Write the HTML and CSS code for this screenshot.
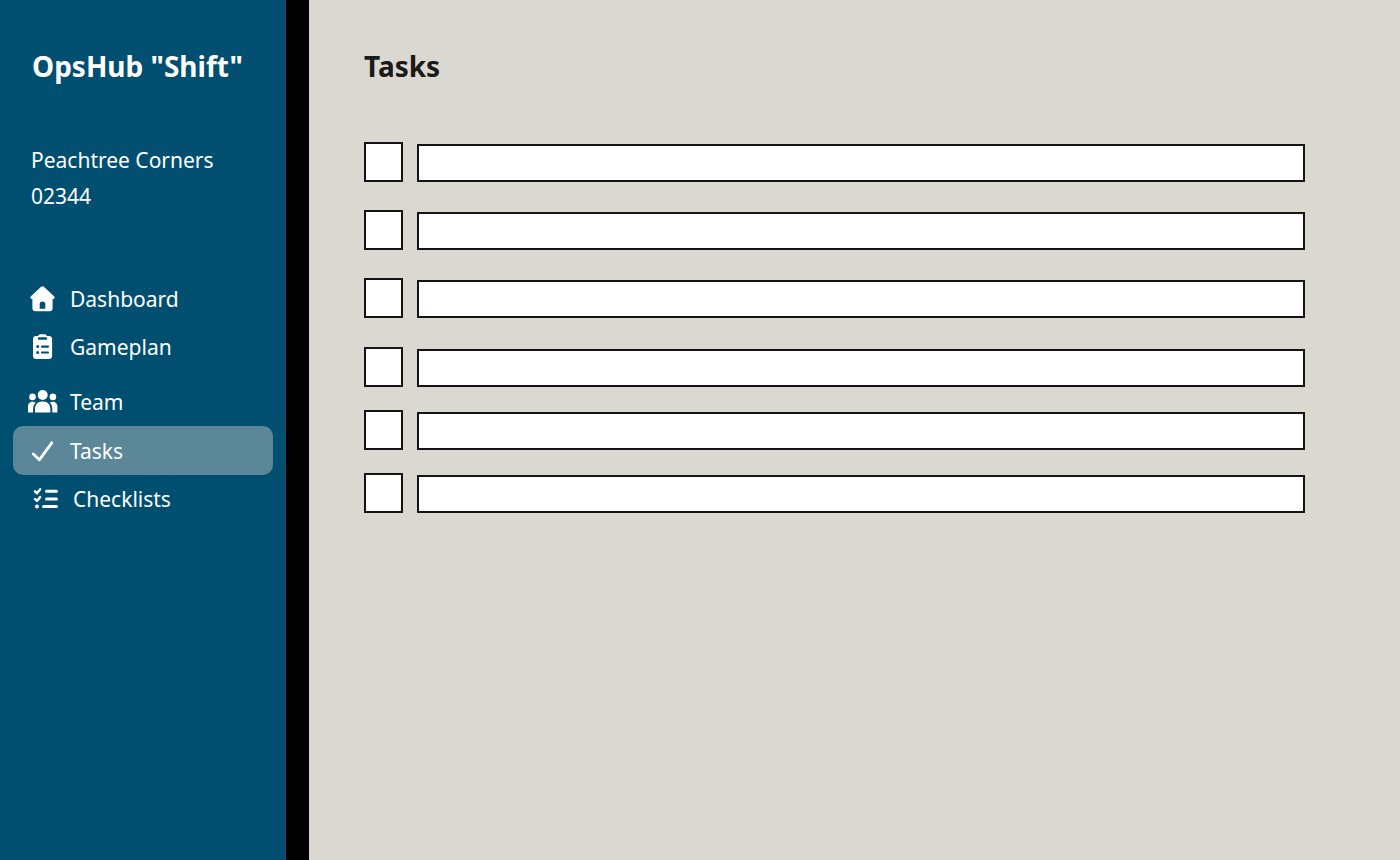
FILE: index.html
```html
<!DOCTYPE html>
<html lang="en">
<head>
<meta charset="utf-8">
<meta name="viewport" content="width=device-width, initial-scale=1">
<title>OpsHub "Shift"</title>
<link rel="stylesheet" href="styles.css">
</head>
<body>
<div class="app">
  <aside class="sidebar">
    <div class="brand">OpsHub "Shift"</div>
    <div class="store">
      <div>Peachtree Corners</div>
      <div>02344</div>
    </div>
    <nav class="nav" aria-label="Main">
      <div class="nav-group">
        <a class="nav-link" href="#dashboard">
          <svg class="icon" viewBox="0 0 30 30" aria-hidden="true"><path fill="currentColor" fill-rule="evenodd" d="M12.900 3a2.200 2.200 0 0 1 3.200 0l10 9.300c1 1 .5 2.700-1 2.700h-.5v9.200a3 3 0 0 1-3 3H7.400a3 3 0 0 1-3-3V15h-.5c-1.500 0-2-1.700-1-2.700zM11.700 24.700h5.600v-4.500a2.800 2.800 0 0 0-5.600 0z"/></svg>
          <span>Dashboard</span>
        </a>
        <a class="nav-link" href="#gameplan">
          <svg class="icon" viewBox="0 0 30 30" aria-hidden="true"><path fill="currentColor" fill-rule="evenodd" d="M10 4c.5-1.200 1.500-1.800 2.500-1.800h4c1 0 2 .6 2.500 1.800h1.800a3.300 3.300 0 0 1 3.300 3.300v16.400a3.300 3.300 0 0 1-3.300 3.300H8.300A3.300 3.300 0 0 1 5 23.700V7.300A3.300 3.300 0 0 1 8.300 4zM11 5.300a1.200 1.200 0 0 0 0 2.400h7a1.200 1.200 0 0 0 0-2.400zM9.700 13.100a1.500 1.500 0 1 0 0 3 1.500 1.500 0 0 0 0-3zM14 13.500a1.100 1.100 0 0 0 0 2.200h6a1.100 1.100 0 0 0 0-2.200zM9.700 19a1.500 1.500 0 1 0 0 3 1.500 1.500 0 0 0 0-3zM14 19.400a1.100 1.100 0 0 0 0 2.200h6a1.100 1.100 0 0 0 0-2.200z"/></svg>
          <span>Gameplan</span>
        </a>
      </div>
      <div class="nav-group">
        <a class="nav-link" href="#team">
          <svg class="icon" viewBox="0 0 30 30" fill="currentColor" aria-hidden="true"><circle cx="14.700" cy="8" r="5"/><circle cx="4.500" cy="9.900" r="3.300"/><circle cx="24.900" cy="9.900" r="3.300"/><path d="M7 25.500v-3.700c0-4 3-7.200 7-7.200h1.400c4 0 7 3.200 7 7.200v3.700zM0 25.500V19.500c0-2.600 2-4.700 4.600-4.700 1.200 0 2.200.3 3 .9-1.700 1.500-2.500 3.700-2.500 6v3.800zM29.400 25.500V19.500c0-2.600-2-4.700-4.600-4.700-1.200 0-2.200.3-3 .9 1.700 1.500 2.500 3.700 2.500 6v3.800z"/></svg>
          <span>Team</span>
        </a>
        <a class="nav-link nav-link-active" href="#tasks" aria-current="page">
          <svg class="icon" viewBox="0 0 30 30" aria-hidden="true"><path fill="none" stroke="currentColor" stroke-width="2.800" stroke-linecap="round" stroke-linejoin="round" d="M5.300 18l6 5.800L23.800 6.800"/></svg>
          <span>Tasks</span>
        </a>
        <a class="nav-link nav-link-wide" href="#checklists">
          <svg class="icon" viewBox="0 0 30 30" fill="none" stroke="currentColor" stroke-linecap="round" stroke-linejoin="round" aria-hidden="true"><path stroke-width="2.400" d="M4 7.300l2 2 3.200-4M4 15l2 2 3.200-4"/><path stroke-width="3" d="M15.500 7.300h10M15.500 14.900h10M12.500 22.500h13"/><circle cx="6" cy="22.500" r="2" fill="currentColor" stroke="none"/></svg>
          <span>Checklists</span>
        </a>
      </div>
    </nav>
  </aside>
  <main class="content">
    <h1 class="title">Tasks</h1>
    <ul class="task-list">
      <li class="task"><input class="task-check" type="checkbox" aria-label="Task 1 done"><input class="task-name" type="text" aria-label="Task 1"></li>
      <li class="task"><input class="task-check" type="checkbox" aria-label="Task 2 done"><input class="task-name" type="text" aria-label="Task 2"></li>
      <li class="task"><input class="task-check" type="checkbox" aria-label="Task 3 done"><input class="task-name" type="text" aria-label="Task 3"></li>
    </ul>
    <ul class="task-list task-list-compact">
      <li class="task"><input class="task-check" type="checkbox" aria-label="Task 4 done"><input class="task-name" type="text" aria-label="Task 4"></li>
      <li class="task"><input class="task-check" type="checkbox" aria-label="Task 5 done"><input class="task-name" type="text" aria-label="Task 5"></li>
      <li class="task"><input class="task-check" type="checkbox" aria-label="Task 6 done"><input class="task-name" type="text" aria-label="Task 6"></li>
    </ul>
  </main>
</div>
</body>
</html>
```
FILE: styles.css
```css
* {
  box-sizing: border-box;
}

body {
  margin: 0;
  font-family: "Noto Sans", sans-serif;
  font-size: 21px;
  color: #1a1a18;
  background: #dad8d1;
}

.app {
  display: flex;
  min-height: 100vh;
}

.sidebar {
  flex: none;
  width: 309px;
  padding: 46px 13px 46px;
  border-right: 23px solid #000;
  background: #004f71;
  color: #fff;
}

.brand,
.title {
  margin: 0;
  font-size: 28px;
  font-weight: 700;
  line-height: 40px;
}

.brand {
  padding-left: 19px;
}

.store {
  margin-top: 56px;
  padding-left: 18px;
  line-height: 36px;
}

.nav {
  display: flex;
  flex-direction: column;
  gap: 7px;
  margin-top: 61px;
}

.nav-link {
  display: flex;
  align-items: center;
  gap: 12px;
  height: 48px;
  padding: 0 15px;
  border-radius: 10px;
  color: inherit;
  text-decoration: none;
}

.nav-link-active {
  height: 49px;
  background: #5b8799;
}

.nav-link-wide {
  padding-left: 18px;
}

.icon {
  flex: none;
  width: 30px;
  height: 30px;
}

.content {
  flex: 1;
  min-width: 0;
  padding: 46px 95px 46px 55px;
}

.task-list {
  display: flex;
  flex-direction: column;
  gap: 28px;
  margin: 56px 0 0;
  padding: 0;
  list-style: none;
}

.task-list-compact {
  gap: 23px;
  margin-top: 29px;
}

.task {
  display: flex;
  align-items: flex-end;
  gap: 14px;
}

.task-check,
.task-name {
  appearance: none;
  margin: 0;
  border: 2px solid #141414;
  border-radius: 0;
  background: #fff;
}

.task-check {
  flex: none;
  width: 39px;
  height: 40px;
}

.task-check:checked {
  background: #004f71;
}

.task-name {
  flex: 1;
  min-width: 0;
  height: 38px;
  padding: 0 10px;
  font: inherit;
}
```
